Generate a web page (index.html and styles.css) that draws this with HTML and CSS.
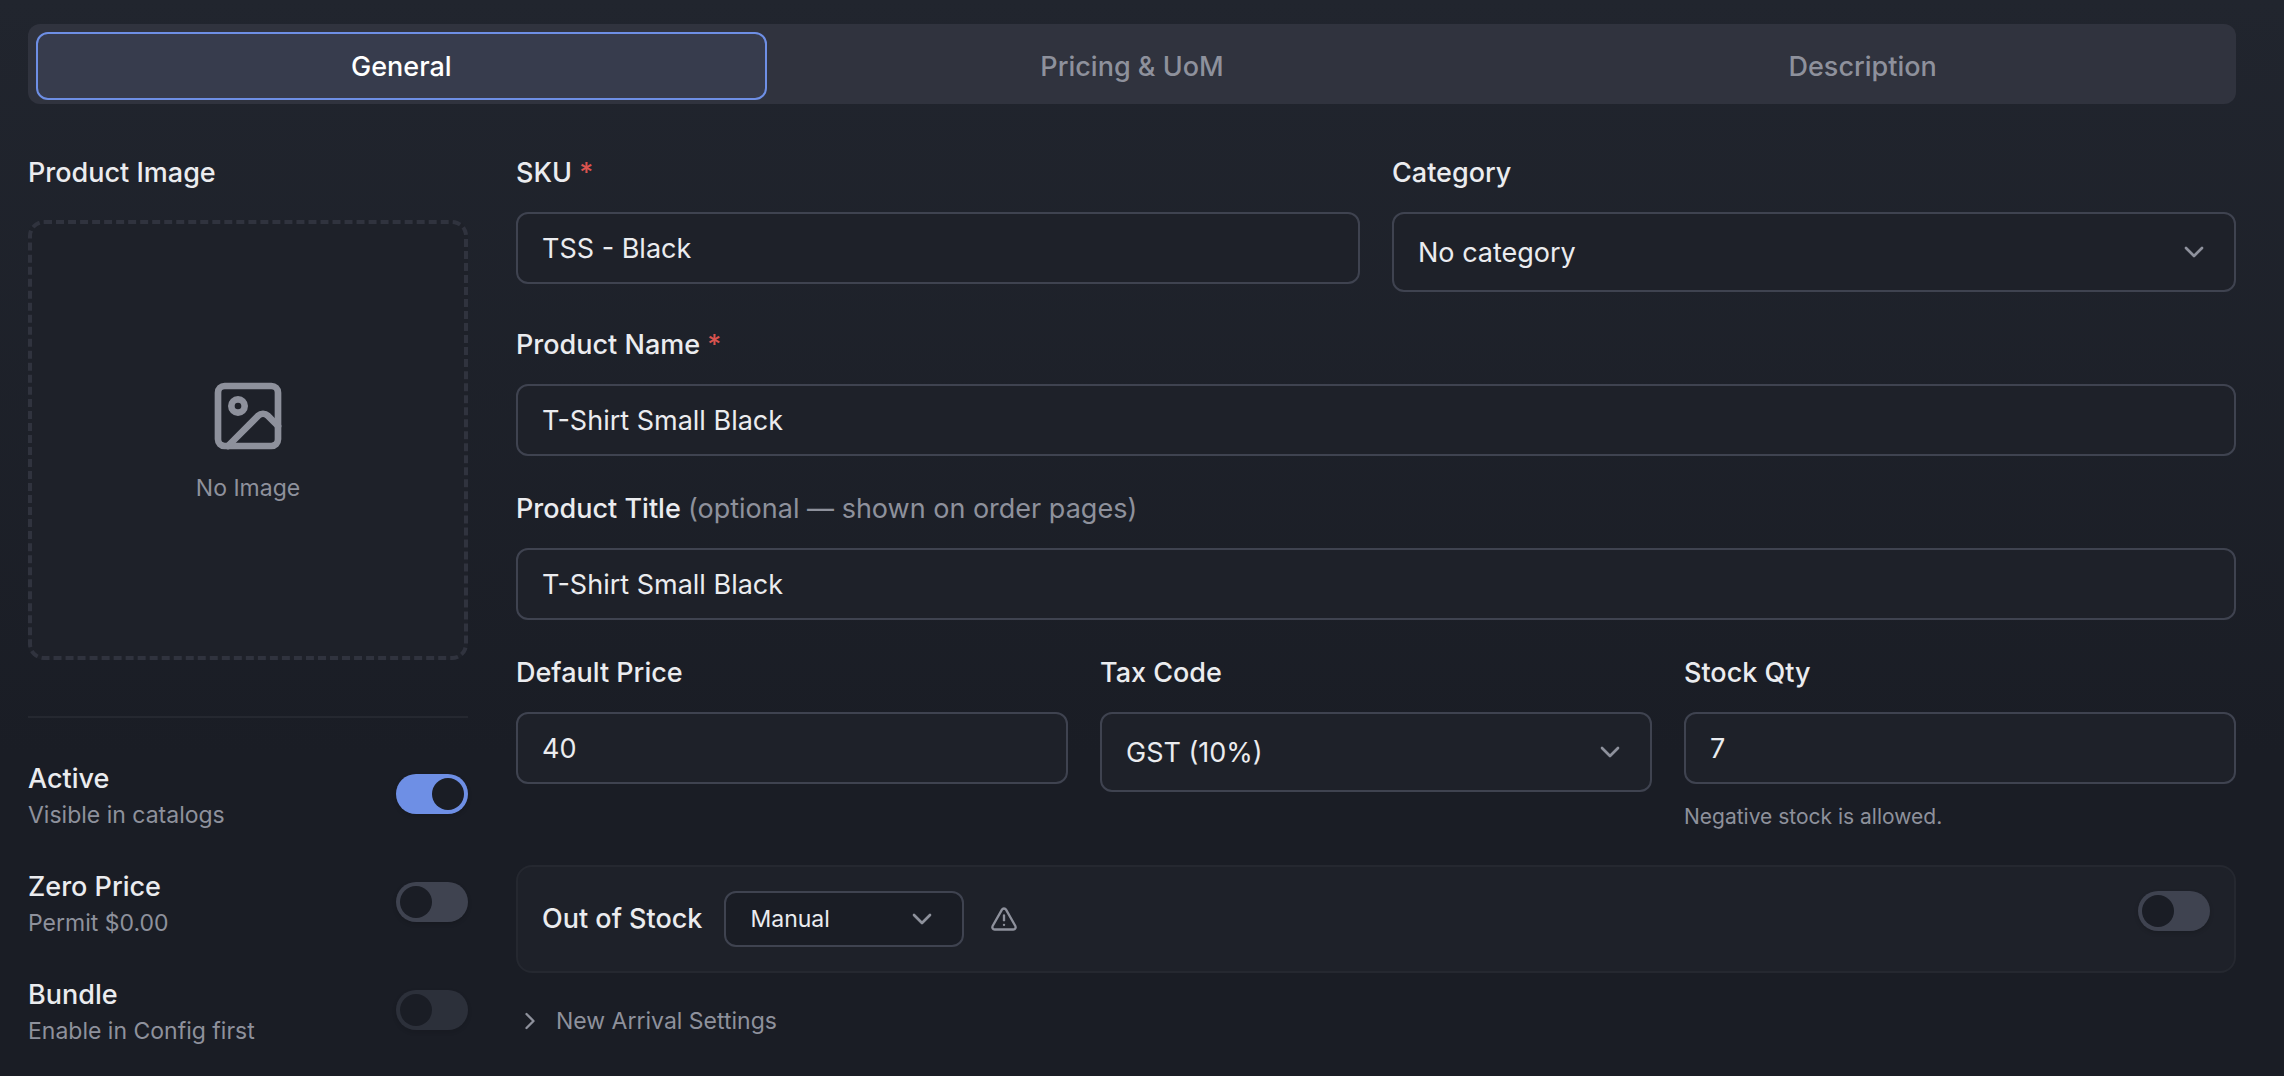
FILE: index.html
```html
<!DOCTYPE html>
<html lang="en">
<head>
    <meta charset="UTF-8">
    <meta name="viewport" content="width=device-width, initial-scale=1.0">
    <title>Edit Product</title>
    <link rel="stylesheet" href="styles.css">
</head>
<body>
    <main class="product-form">
        <div class="tabs" role="tablist">
            <button type="button" class="tab active" role="tab" aria-selected="true">General</button>
            <button type="button" class="tab" role="tab" aria-selected="false">Pricing &amp; UoM</button>
            <button type="button" class="tab" role="tab" aria-selected="false">Description</button>
        </div>

        <div class="layout">
            <aside class="sidebar">
                <div class="label">Product Image</div>
                <div class="image-box">
                    <svg class="image-icon" viewBox="0 0 24 24">
                        <rect x="3" y="3" width="18" height="18" rx="2"/>
                        <circle cx="9" cy="9" r="2"/>
                        <path d="m21 15-3.086-3.086a2 2 0 0 0-2.828 0L6 21"/>
                    </svg>
                    <span>No Image</span>
                </div>

                <div class="options">
                    <div class="option">
                        <label for="active">
                            <span class="option-title">Active</span>
                            <span class="option-text">Visible in catalogs</span>
                        </label>
                        <input type="checkbox" role="switch" class="switch" id="active" checked>
                    </div>
                    <div class="option">
                        <label for="zeroPrice">
                            <span class="option-title">Zero Price</span>
                            <span class="option-text">Permit $0.00</span>
                        </label>
                        <input type="checkbox" role="switch" class="switch" id="zeroPrice">
                    </div>
                    <div class="option">
                        <label for="bundle">
                            <span class="option-title">Bundle</span>
                            <span class="option-text">Enable in Config first</span>
                        </label>
                        <input type="checkbox" role="switch" class="switch" id="bundle" disabled>
                    </div>
                </div>
            </aside>

            <section class="fields">
                <div class="row two">
                    <div class="field">
                        <label class="label" for="sku">SKU <span class="required">*</span></label>
                        <input type="text" class="input" id="sku" value="TSS - Black">
                    </div>
                    <div class="field">
                        <label class="label" for="category">Category</label>
                        <div class="select">
                            <select id="category">
                                <option>No category</option>
                            </select>
                            <svg class="chevron" viewBox="0 0 24 24"><path d="m6 9 6 6 6-6"/></svg>
                        </div>
                    </div>
                </div>

                <div class="field">
                    <label class="label" for="name">Product Name <span class="required">*</span></label>
                    <input type="text" class="input" id="name" value="T-Shirt Small Black">
                </div>

                <div class="field">
                    <label class="label" for="title">Product Title <span class="optional">(optional — shown on order pages)</span></label>
                    <input type="text" class="input" id="title" value="T-Shirt Small Black">
                </div>

                <div class="row three">
                    <div class="field">
                        <label class="label" for="price">Default Price</label>
                        <input type="text" inputmode="decimal" class="input" id="price" value="40">
                    </div>
                    <div class="field">
                        <label class="label" for="tax">Tax Code</label>
                        <div class="select">
                            <select id="tax">
                                <option>GST (10%)</option>
                            </select>
                            <svg class="chevron" viewBox="0 0 24 24"><path d="m6 9 6 6 6-6"/></svg>
                        </div>
                    </div>
                    <div class="field">
                        <label class="label" for="stock">Stock Qty</label>
                        <input type="text" inputmode="numeric" class="input" id="stock" value="7">
                        <p class="hint">Negative stock is allowed.</p>
                    </div>
                </div>

                <div class="stock-box">
                    <label class="label" for="stockMode">Out of Stock</label>
                    <div class="select small">
                        <select id="stockMode">
                            <option>Manual</option>
                            <option>Automatic</option>
                        </select>
                        <svg class="chevron" viewBox="0 0 24 24"><path d="m6 9 6 6 6-6"/></svg>
                    </div>
                    <svg class="warning" viewBox="0 0 24 24">
                        <path d="m21.73 18-8-14a2 2 0 0 0-3.48 0l-8 14A2 2 0 0 0 4 21h16a2 2 0 0 0 1.73-3"/>
                        <path d="M12 9v4"/>
                        <path d="M12 17h.01"/>
                    </svg>
                    <input type="checkbox" role="switch" class="switch" id="outOfStock" aria-label="Out of stock">
                </div>

                <button type="button" class="expand" aria-expanded="false">
                    <svg viewBox="0 0 24 24"><path d="m9 18 6-6-6-6"/></svg>
                    New Arrival Settings
                </button>
            </section>
        </div>
    </main>
</body>
</html>
```
FILE: styles.css
```css
:root {
    --bg-top: #21252e;
    --bg-bottom: #1a1d25;
    --field: #1e2129;
    --border: #3f4350;
    --border-soft: #252830;
    --dashed: #30333e;
    --text: #ebecef;
    --muted: #8e919c;
    --primary: #6e8fe5;
    --danger: #d9534f;
}

* {
    margin: 0;
    padding: 0;
    box-sizing: border-box;
}

body {
    font-family: Inter, 'Liberation Sans', sans-serif;
    font-size: 27px;
    line-height: 42px;
    min-height: 100vh;
    color: var(--text);
    background: linear-gradient(var(--bg-top), var(--bg-bottom) 70%);
}

button,
input,
select {
    font: inherit;
    color: inherit;
}

svg {
    fill: none;
    stroke: currentColor;
    stroke-width: 2;
    stroke-linecap: round;
    stroke-linejoin: round;
    flex-shrink: 0;
}

.product-form {
    padding: 24px 48px 32px 28px;
}

/* Tabs */
.tabs {
    display: grid;
    grid-template-columns: repeat(3, 1fr);
    padding: 8px 8px 4px;
    margin-bottom: 48px;
    border-radius: 12px;
    background: #30333e;
}

.tab {
    height: 68px;
    padding-top: 2px;
    border: 2px solid transparent;
    border-radius: 12px;
    background: none;
    color: var(--muted);
    font-weight: 500;
    cursor: pointer;
}

.tab.active {
    background: #373c4d;
    border-color: var(--primary);
    color: #fff;
}

.layout {
    display: grid;
    grid-template-columns: 440px 1fr;
    gap: 48px;
}

.label {
    display: block;
    font-weight: 500;
}

.required {
    color: var(--danger);
}

.optional {
    color: var(--muted);
    font-weight: 400;
}

/* Left column */
.image-box {
    display: flex;
    flex-direction: column;
    align-items: center;
    justify-content: center;
    gap: 16px;
    aspect-ratio: 1;
    margin-top: 26px;
    border: 4px dashed var(--dashed);
    border-radius: 16px;
    background: var(--field);
    color: var(--muted);
    font-size: 23px;
    line-height: 32px;
}

.image-icon {
    width: 80px;
    height: 80px;
}

.options {
    display: flex;
    flex-direction: column;
    gap: 36px;
    margin-top: 56px;
    padding-top: 40px;
    border-top: 2px solid var(--border-soft);
}

.option {
    display: flex;
    align-items: center;
    justify-content: space-between;
}

.option-title,
.option-text {
    display: block;
}

.option-title {
    font-weight: 500;
}

.option-text {
    color: var(--muted);
    font-size: 23px;
    line-height: 30px;
}

.switch {
    appearance: none;
    width: 72px;
    height: 40px;
    padding: 4px;
    border-radius: 20px;
    background: var(--border);
    box-shadow: 0 2px 4px rgba(0, 0, 0, 0.15);
    cursor: pointer;
}

.switch::before {
    content: "";
    display: block;
    width: 32px;
    height: 32px;
    border-radius: 50%;
    background: var(--bg-bottom);
}

.switch:checked {
    background: var(--primary);
}

.switch:checked::before {
    margin-left: auto;
}

.switch:disabled {
    opacity: 0.5;
    cursor: default;
}

/* Right column */
.fields {
    display: flex;
    flex-direction: column;
    gap: 32px;
}

.row {
    display: grid;
    gap: 32px;
}

.two {
    grid-template-columns: repeat(2, 1fr);
}

.three {
    grid-template-columns: repeat(3, 1fr);
}

.input,
.select select {
    width: 100%;
    padding: 0 24px;
    border: 2px solid var(--border);
    border-radius: 12px;
    background: var(--field);
    outline: none;
}

.input {
    display: block;
    height: 72px;
    margin-top: 18px;
}

.input:focus,
.select select:focus {
    border-color: var(--primary);
}

.select {
    display: grid;
    align-items: center;
    margin-top: 18px;
}

.select select {
    grid-area: 1 / 1;
    appearance: none;
    height: 80px;
    padding-top: 2px;
}

.chevron {
    grid-area: 1 / 1;
    justify-self: end;
    width: 32px;
    height: 32px;
    margin-right: 26px;
    color: var(--muted);
    pointer-events: none;
}

.select.small {
    width: 240px;
    margin-top: 0;
}

.select.small select {
    height: 56px;
    padding-top: 0;
    background: var(--bg-bottom);
    font-size: 23px;
}

.hint {
    margin-top: 16px;
    color: var(--muted);
    font-size: 21px;
    line-height: 33px;
}

.stock-box {
    display: flex;
    align-items: center;
    padding: 24px;
    border: 2px solid var(--border-soft);
    border-radius: 16px;
    background: var(--field);
}

.stock-box .select {
    margin-left: 22px;
}

.stock-box .switch {
    align-self: flex-start;
    margin-left: auto;
}

.warning {
    width: 28px;
    height: 28px;
    margin-left: 26px;
    color: var(--muted);
}

.expand {
    display: flex;
    align-items: center;
    align-self: flex-start;
    gap: 12px;
    border: none;
    background: none;
    color: var(--muted);
    font-size: 23px;
    line-height: 32px;
    cursor: pointer;
}

.expand svg {
    width: 28px;
    height: 28px;
}
```
